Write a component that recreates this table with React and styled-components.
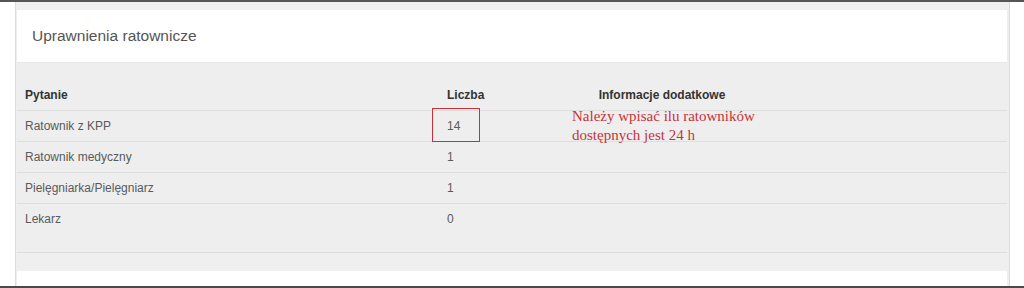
import React from 'react'
import styled, { createGlobalStyle } from 'styled-components'

const GlobalStyle = createGlobalStyle`
  html, body {
    margin: 0;
    padding: 0;
    background: #ffffff;
  }
  body {
    font-family: "Liberation Sans", Arial, sans-serif;
  }
`;

const Frame = styled.div`
  height: 288px;
  box-sizing: border-box;
  border-top: 2px solid #555555;
  border-bottom: 2px solid #4a4a4a;
  background: #ffffff;
  padding: 0 14px 0 15px;
  overflow: hidden;
`;

const Wrapper = styled.div`
  height: 100%;
  box-sizing: border-box;
  background: #efefef;
  border-left: 1px solid #dcdcdc;
  border-right: 1px solid #dcdcdc;
  padding: 8px 2px 0 1px;
`;

const Panel = styled.section`
  background: #eeeeee;
  border-bottom: 1px solid #dddddd;
`;

const PanelHeading = styled.div`
  background: #ffffff;
  height: 52px;
  display: flex;
  align-items: center;
  padding: 0 15px;
  font-size: 15.5px;
  color: #555555;
  border-bottom: 1px solid #e8e8e8;
`;

const PanelBody = styled.div`
  padding: 16px 0 17px;
`;

const Table = styled.table`
  width: 100%;
  border-collapse: collapse;
  font-size: 12px;
  color: #5a5a5a;
`;

const Th = styled.th`
  height: 31px;
  padding: 0 8px;
  font-weight: bold;
  color: #333333;
  text-align: ${(p) => p.align || 'left'};
  border-bottom: 1px solid #dedede;
`;

const Tr = styled.tr`
  height: 31px;
  & + & td {
    border-top: 1px solid #dedede;
  }
`;

const Td = styled.td`
  padding: 0 8px;
  position: relative;
`;

const Highlight = styled.span`
  position: absolute;
  left: -7px;
  top: -3px;
  width: 48px;
  height: 34px;
  border: 1px solid #c8303a;
  box-sizing: border-box;
`;

const Note = styled.div`
  position: absolute;
  left: 33px;
  top: -4px;
  width: 200px;
  font-family: "Liberation Serif", "Times New Roman", serif;
  font-size: 15px;
  line-height: 19px;
  color: #c8323a;
  white-space: nowrap;
`;

const NextPanel = styled.div`
  margin-top: 18px;
  background: #ffffff;
  height: 40px;
`;

const ROWS = [
  { name: 'Ratownik z KPP', count: 14, marked: true },
  { name: 'Ratownik medyczny', count: 1 },
  { name: 'Pielęgniarka/Pielęgniarz', count: 1 },
  { name: 'Lekarz', count: 0 },
];

export default function App() {
  return (
    <>
      <GlobalStyle />
      <Frame>
        <Wrapper>
          <Panel>
            <PanelHeading>Uprawnienia ratownicze</PanelHeading>
            <PanelBody>
              <Table>
                <colgroup>
                  <col style={{ width: 422 }} />
                  <col style={{ width: 100 }} />
                  <col style={{ width: 246 }} />
                  <col />
                </colgroup>
                <thead>
                  <tr>
                    <Th>Pytanie</Th>
                    <Th>Liczba</Th>
                    <Th align="center">Informacje dodatkowe</Th>
                    <Th />
                  </tr>
                </thead>
                <tbody>
                  {ROWS.map((row) => (
                    <Tr key={row.name}>
                      <Td>{row.name}</Td>
                      <Td>
                        {row.marked && <Highlight />}
                        {row.count}
                      </Td>
                      <Td>
                        {row.marked && (
                          <Note>
                            Należy wpisać ilu ratowników
                            <br />
                            dostępnych jest 24 h
                          </Note>
                        )}
                      </Td>
                      <Td />
                    </Tr>
                  ))}
                </tbody>
              </Table>
            </PanelBody>
          </Panel>
          <NextPanel />
        </Wrapper>
      </Frame>
    </>
  )
}
